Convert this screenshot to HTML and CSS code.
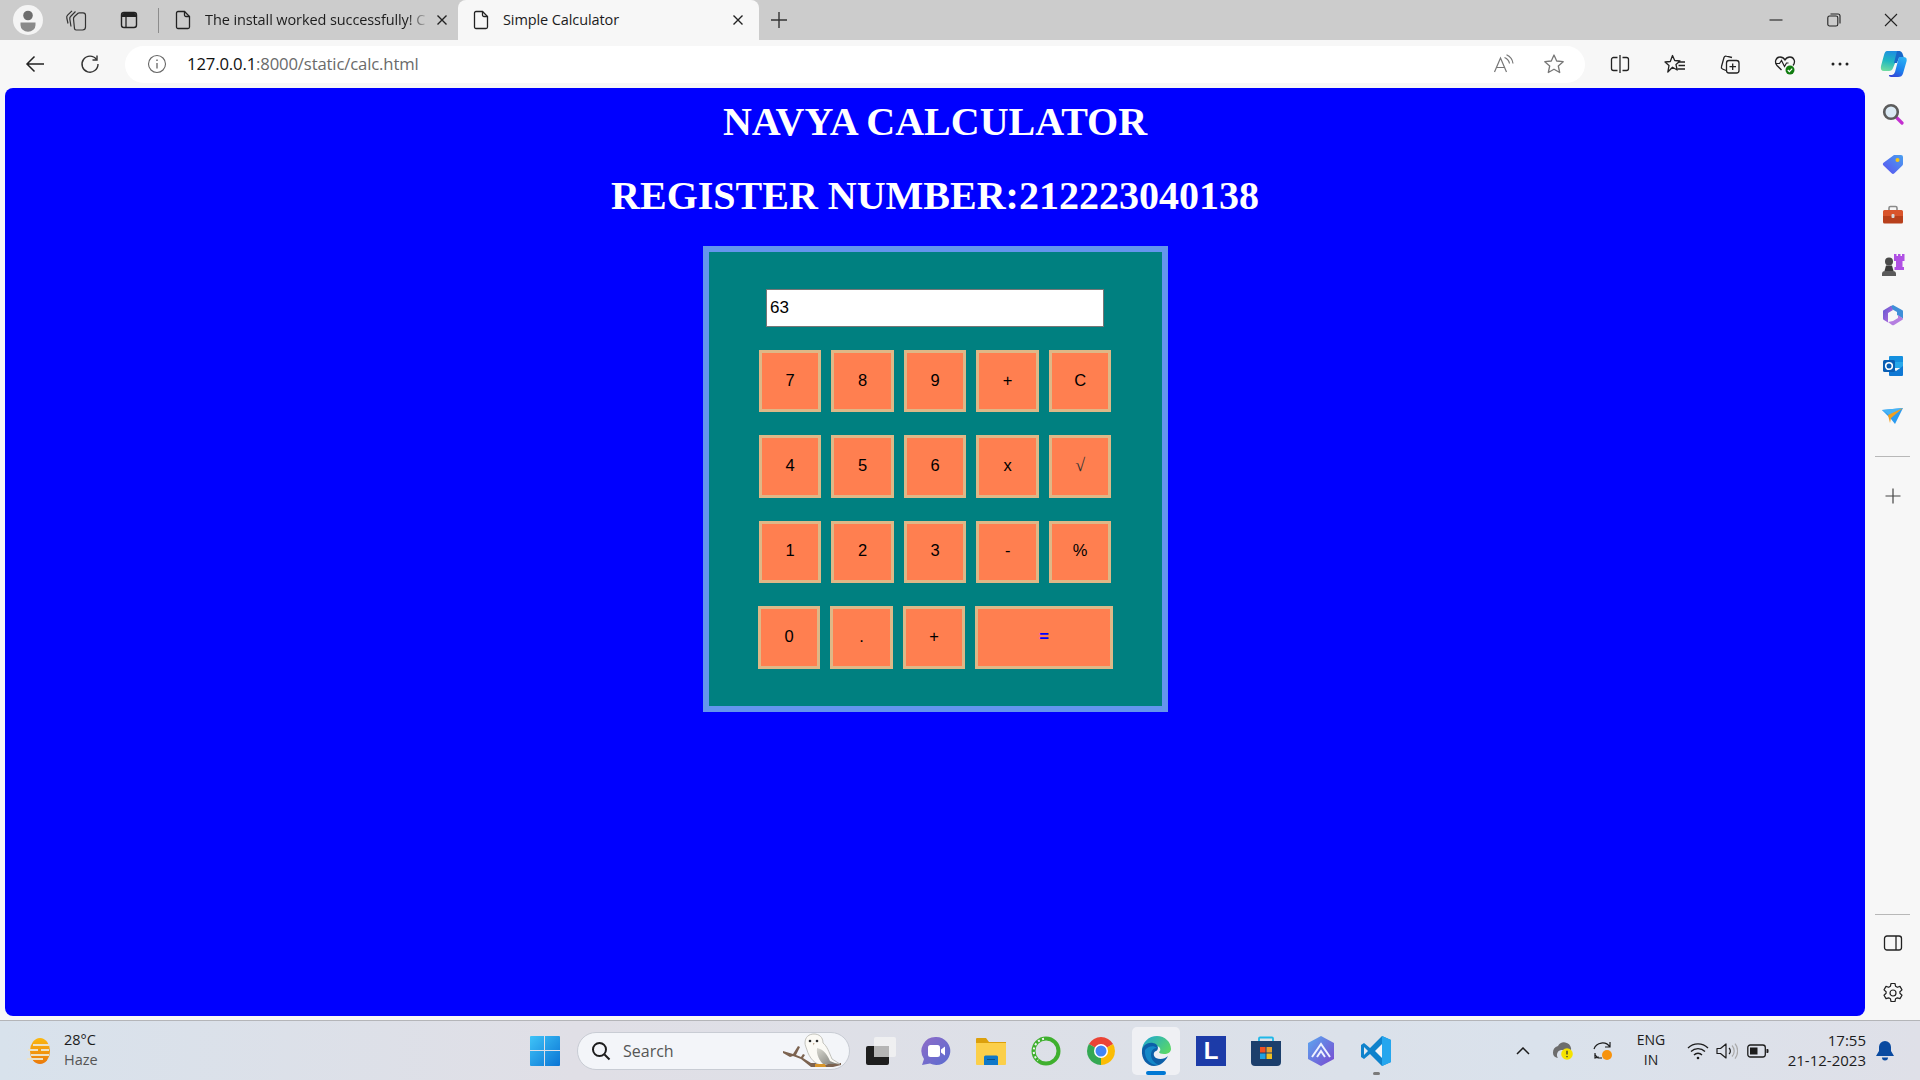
FILE: index.html
```html
<!DOCTYPE html>
<html lang="en">
    <head>
        <meta charset="UTF-8">
        <title>Simple Calculator</title>
        <link rel="stylesheet" href="styles.css">
    </head>
    <body>
        <!-- browser tab strip -->
        <div class="tabstrip">
            <div class="avatar">
                <svg width="30" height="30" viewBox="0 0 30 30"><circle cx="15" cy="15" r="15" fill="#f4f4f4"/><circle cx="15" cy="10.500" r="4.800" fill="#6e6e6e"/><path d="M7.500 17.500h15v2.500a6 5.500 0 0 1-15 0z" fill="#8a8a8a"/></svg>
            </div>
            <div class="strip-btn">
                <svg width="22" height="24" viewBox="0 0 22 24" fill="none" stroke="#333" stroke-width="1.200"><path d="M3 15.500L1.800 10a3 3 0 0 1 .8-2.800L7 2.800"/><path d="M6 18.500L4.800 11a3 3 0 0 1 1-2.800L10.500 3.500"/><path d="M11 22a1.500 1.500 0 0 1-1.500-1.300L8.500 11a3 3 0 0 1 1-2.500L13 5.300a2 2 0 0 1 1.500-.5H18a2.500 2.500 0 0 1 2.500 2.500V19a3 3 0 0 1-3 3z"/></svg>
            </div>
            <div class="strip-btn strip-gap">
                <svg width="20" height="20" viewBox="0 0 20 20"><rect x="2.500" y="2.500" width="15" height="15" rx="2.500" fill="none" stroke="#222" stroke-width="1.400"/><path d="M3 5a2 2 0 0 1 2-2h10a2 2 0 0 1 2 2v2H3z" fill="#222"/><path d="M7 7v10" stroke="#222" stroke-width="1.300"/></svg>
            </div>
            <div class="strip-sep"></div>
            <div class="tab">
                <svg class="doc" width="16" height="20" viewBox="0 0 16 20" fill="none" stroke="#222" stroke-width="1.300"><path d="M3 1.500h6.500l5 5V17a1.500 1.500 0 0 1-1.500 1.500H3A1.500 1.500 0 0 1 1.500 17V3A1.500 1.500 0 0 1 3 1.500z"/><path d="M9.500 1.500V5A1.500 1.500 0 0 0 11 6.500h3.500"/></svg>
                <span class="tab-title tab-fade">The install worked successfully! C</span>
                <svg class="tab-close" width="12" height="12" viewBox="0 0 12 12" stroke="#222" stroke-width="1.400"><path d="M1.500 1.500l9 9M10.500 1.500l-9 9"/></svg>
            </div>
            <div class="tab tab-active">
                <svg class="doc" width="16" height="20" viewBox="0 0 16 20" fill="none" stroke="#222" stroke-width="1.300"><path d="M3 1.500h6.500l5 5V17a1.500 1.500 0 0 1-1.500 1.500H3A1.500 1.500 0 0 1 1.500 17V3A1.500 1.500 0 0 1 3 1.500z"/><path d="M9.500 1.500V5A1.500 1.500 0 0 0 11 6.500h3.500"/></svg>
                <span class="tab-title">Simple Calculator</span>
                <svg class="tab-close" width="12" height="12" viewBox="0 0 12 12" stroke="#222" stroke-width="1.400"><path d="M1.500 1.500l9 9M10.500 1.500l-9 9"/></svg>
            </div>
            <div class="new-tab">
                <svg width="18" height="18" viewBox="0 0 18 18" stroke="#333" stroke-width="1.400"><path d="M9 1v16M1 9h16"/></svg>
            </div>
            <div class="win-btns">
                <div class="win-btn"><svg width="14" height="14" viewBox="0 0 14 14" stroke="#222" stroke-width="1.100"><path d="M0.500 7h13"/></svg></div>
                <div class="win-btn"><svg width="14" height="14" viewBox="0 0 14 14" fill="none" stroke="#222" stroke-width="1.100"><rect x="0.800" y="3" width="10" height="10" rx="1.800"/><path d="M3.500 1h7.500a2 2 0 0 1 2 2v7.500"/></svg></div>
                <div class="win-btn"><svg width="14" height="14" viewBox="0 0 14 14" stroke="#222" stroke-width="1.100"><path d="M1 1l12 12M13 1L1 13"/></svg></div>
            </div>
        </div>

        <!-- address bar row -->
        <div class="toolbar">
            <div class="tool tool-back">
                <svg width="20" height="18" viewBox="0 0 20 18" fill="none" stroke="#222" stroke-width="1.500"><path d="M19 9H2M9.500 1.500L2 9l7.500 7.500"/></svg>
            </div>
            <div class="tool tool-reload">
                <svg width="20" height="20" viewBox="0 0 20 20" fill="none" stroke="#333" stroke-width="1.400"><path d="M16.500 5.500A8 8 0 1 0 18 10"/><path d="M12.500 6h4.500V1.500"/></svg>
            </div>
            <div class="address">
                <svg class="info" width="20" height="20" viewBox="0 0 20 20" fill="none" stroke="#666" stroke-width="1.100"><circle cx="10" cy="10" r="8.500"/><path d="M10 9v5.500" stroke-width="1.300"/><path d="M10 5.500v1.500" stroke-width="1.400"/></svg>
                <span class="url"><b>127.0.0.1</b>:8000/static/calc.html</span>
                <svg class="read-aloud" width="22" height="20" viewBox="0 0 22 20" fill="none" stroke="#777" stroke-width="1.200"><path d="M1.500 18L7.500 4l6 14M3.500 13.500h8"/><path d="M11.500 3.500a8 8 0 0 1 5 6M13.500 0.800a11 11 0 0 1 6.500 8.700"/></svg>
                <svg class="star" width="22" height="22" viewBox="0 0 22 22" fill="none" stroke="#777" stroke-width="1.300"><path d="M11 2l2.700 6 6.500.7-4.900 4.300 1.400 6.500L11 16.200 5.300 19.500l1.400-6.500L1.800 8.700 8.300 8z" stroke-linejoin="round"/></svg>
            </div>
            <div class="tool tool-split">
                <svg width="20" height="20" viewBox="0 0 20 20" fill="none" stroke="#222" stroke-width="1.300"><path d="M7.500 3.500H3.500a2 2 0 0 0-2 2v9a2 2 0 0 0 2 2h4M12.500 3.500h4a2 2 0 0 1 2 2v9a2 2 0 0 1-2 2h-4"/><path d="M10 1v18"/></svg>
            </div>
            <div class="tool">
                <svg width="22" height="20" viewBox="0 0 22 20" fill="none" stroke="#222" stroke-width="1.300"><path d="M8.500 1.500l2.200 5 5.300.5-4 3.600 1.200 5.400-4.700-2.800L3.800 18l1.200-6.400-4-3.600 5.300-.5z" stroke-linejoin="round"/><path d="M14 8h7M14.500 11.500h6.500M13.500 15h7.500"/></svg>
            </div>
            <div class="tool">
                <svg width="22" height="22" viewBox="0 0 22 22" fill="none" stroke="#222" stroke-width="1.300"><path d="M7 17.500L3.500 16a2 2 0 0 1-1-2.500L5 4.500a2 2 0 0 1 2.400-1.300L13 4.500"/><rect x="7.500" y="7.500" width="12.500" height="12.500" rx="2.500"/><path d="M13.700 10.500v6.500M10.500 13.700H17"/></svg>
            </div>
            <div class="tool">
                <svg width="22" height="22" viewBox="0 0 22 22"><path d="M7.500 17L3 12.500C0 9 2 4 6 4c2.200 0 3.800 1 5 3 1.200-2 2.800-3 5-3 4 0 6 5 3 8.500" fill="none" stroke="#222" stroke-width="1.300"/><path d="M1.500 10.500h4l2-3 3 6 2-3.500h2" fill="none" stroke="#222" stroke-width="1.200"/><circle cx="16" cy="17" r="4.500" fill="#107c10"/><path d="M13.800 17l1.600 1.600 2.800-3" fill="none" stroke="#fff" stroke-width="1.200"/></svg>
            </div>
            <div class="tool">
                <svg width="18" height="4" viewBox="0 0 18 4" fill="#222"><circle cx="2" cy="2" r="1.500"/><circle cx="9" cy="2" r="1.500"/><circle cx="16" cy="2" r="1.500"/></svg>
            </div>
            <div class="tool tool-copilot">
                <svg width="27" height="28" viewBox="0 0 27 28"><defs><linearGradient id="cpa" x1="0.500" y1="0" x2="0.300" y2="1"><stop offset="0" stop-color="#1e8fe0"/><stop offset="0.500" stop-color="#20b8c0"/><stop offset="1" stop-color="#70dca0"/></linearGradient><linearGradient id="cpb" x1="0.700" y1="0" x2="0.300" y2="1"><stop offset="0" stop-color="#2ab0f4"/><stop offset="0.600" stop-color="#1c80ec"/><stop offset="1" stop-color="#3448d8"/></linearGradient></defs><path d="M7 1H20L13 18Q12 21 9 21H4Q0 21 1 16L4 5Q5 1 7 1z" fill="url(#cpa)"/><path d="M17 1h2q3 0 4 4l1 3h-5l-2 5h-3z" fill="#1868c8"/><path d="M19 7h4.500Q27.500 7 26.500 11.500L23 23.500Q22 27 18 27H11Q8.500 27 9 25H12Q14 25 15 22z" fill="url(#cpb)"/></svg>
            </div>
        </div>

        <div class="middle">
            <div class="page">
                <h1 class="title">NAVYA CALCULATOR</h1>
                <h1 class="regno">REGISTER NUMBER:212223040138</h1>
                <form class="calc" name="calc" onsubmit="return false">
                    <input class="display" type="text" value="63">
                    <div class="keys">
                        <div class="key-row">
                            <button class="key">7</button>
                            <button class="key">8</button>
                            <button class="key">9</button>
                            <button class="key">+</button>
                            <button class="key">C</button>
                        </div>
                        <div class="key-row">
                            <button class="key">4</button>
                            <button class="key">5</button>
                            <button class="key">6</button>
                            <button class="key">x</button>
                            <button class="key key-root">√</button>
                        </div>
                        <div class="key-row">
                            <button class="key">1</button>
                            <button class="key">2</button>
                            <button class="key">3</button>
                            <button class="key">-</button>
                            <button class="key">%</button>
                        </div>
                        <div class="key-row key-row-last">
                            <button class="key">0</button>
                            <button class="key">.</button>
                            <button class="key">+</button>
                            <button class="key key-equals">=</button>
                        </div>
                    </div>
                </form>
            </div>

            <!-- edge sidebar -->
            <div class="sidebar">
                <div class="side-item">
                    <svg width="22" height="22" viewBox="0 0 22 22"><path d="M13 13l7 7" stroke="#c32fd0" stroke-width="3.200" stroke-linecap="round"/><circle cx="9" cy="9" r="6.800" fill="#dbeaf4" stroke="#5c5c5c" stroke-width="2.600"/></svg>
                </div>
                <div class="side-item">
                    <svg width="22" height="20" viewBox="0 0 22 20"><defs><linearGradient id="tag" x1="0" y1="1" x2="1" y2="0"><stop offset="0" stop-color="#5a50f0"/><stop offset="1" stop-color="#4aa0f0"/></linearGradient></defs><path d="M12 1h7a2 2 0 0 1 2 2v7a2 2 0 0 1-.6 1.400l-8 7.800a2 2 0 0 1-2.800 0L1.500 11.500a2 2 0 0 1 0-2.800z" fill="url(#tag)"/><circle cx="15.500" cy="6" r="2" fill="#f5c518"/></svg>
                </div>
                <div class="side-item">
                    <svg width="22" height="20" viewBox="0 0 22 20"><path d="M7 5V3a1.500 1.500 0 0 1 1.500-1.500h5A1.500 1.500 0 0 1 15 3v2" fill="none" stroke="#8a8a8a" stroke-width="1.600"/><path d="M2.500 5h17A1.500 1.500 0 0 1 21 6.500V11H1V6.500A1.500 1.500 0 0 1 2.500 5z" fill="#d9542b"/><path d="M1 11h20v6a1.500 1.500 0 0 1-1.500 1.500h-17A1.500 1.500 0 0 1 1 17z" fill="#b8401c"/><rect x="9.500" y="9" width="3" height="4" rx="1" fill="#d8d8d8"/></svg>
                </div>
                <div class="side-item">
                    <svg width="24" height="24" viewBox="0 0 24 24"><path d="M13 1h2.500v2H17V1h2.500v2H21V1h2.500v7h-2v6h1.500v3H13.500v-3H15V8h-2z" fill="#b050e4"/><circle cx="8" cy="8.500" r="4" fill="#4a4a4a"/><path d="M5 12.500h6l1.500 5.500h-9z" fill="#3a3a3a"/><path d="M1 23v-2a3 3 0 0 1 3-3h8a3 3 0 0 1 3 3v2z" fill="#5a5a5a"/></svg>
                </div>
                <div class="side-item">
                    <svg width="22" height="22" viewBox="0 0 22 22"><defs><linearGradient id="m3a" x1="0" y1="0" x2="1" y2="1"><stop offset="0" stop-color="#5f56d0"/><stop offset="1" stop-color="#c070e0"/></linearGradient></defs><path d="M11 1l9 5a1.500 1.500 0 0 1 1 1.500v7L15 11V8L8 4 9 2z" fill="#3f8fd8"/><path d="M9 1.800L2 6A1.500 1.500 0 0 0 1 7.500v7A1.500 1.500 0 0 0 2 16l4 2.500V9l5-3z" fill="url(#m3a)"/><path d="M6 18l4 3a2 2 0 0 0 2 0l8-5a1.500 1.500 0 0 0 1-1.500l-5-3.500v3l-5 3z" fill="#b57ee0"/></svg>
                </div>
                <div class="side-item">
                    <svg width="22" height="22" viewBox="0 0 22 22"><path d="M8 1h12a1 1 0 0 1 1 1v5H7V2a1 1 0 0 1 1-1z" fill="#1490df"/><path d="M7 7h14v6H7z" fill="#28a8ea"/><path d="M7 11l7 5 7-5v9a1 1 0 0 1-1 1H8a1 1 0 0 1-1-1z" fill="#0f78d4"/><rect x="1" y="5" width="12" height="12" rx="1.500" fill="#0a5fb4"/><circle cx="7" cy="11" r="3.300" fill="none" stroke="#fff" stroke-width="1.600"/></svg>
                </div>
                <div class="side-item">
                    <svg width="22" height="18" viewBox="0 0 22 18"><path d="M0 3l21-2-8 16-4-5z" fill="#2b9bf0"/><path d="M0 3l21-2L7 8z" fill="#48b4f5"/><path d="M6 8l15-7L9 11l-1 5z" fill="#f0a020"/></svg>
                </div>
                <div class="side-rule"></div>
                <div class="side-item side-add">
                    <svg width="16" height="16" viewBox="0 0 16 16" stroke="#444" stroke-width="1.200"><path d="M8 0.500v15M0.500 8h15"/></svg>
                </div>
                <div class="side-bottom">
                    <div class="side-rule side-rule-low"></div>
                    <div class="side-item">
                        <svg width="20" height="18" viewBox="0 0 20 18" fill="none" stroke="#222" stroke-width="1.300"><rect x="1.500" y="2" width="17" height="14" rx="2.500"/><path d="M13 2v14"/></svg>
                    </div>
                    <div class="side-item">
                        <svg width="22" height="22" viewBox="0 0 22 22" fill="none" stroke="#222" stroke-width="1.200"><circle cx="11" cy="11" r="3"/><path d="M9 1.500h4l.6 2.800 1.700 1 2.700-.9 2 3.500-2.100 1.800v1.600l2.100 1.900-2 3.400-2.700-.8-1.700.9-.6 2.800H9l-.6-2.800-1.700-.9-2.700.8-2-3.400 2.100-1.900V9.700L2 7.900l2-3.500 2.700.9 1.700-1z" stroke-linejoin="round"/></svg>
                    </div>
                </div>
            </div>
        </div>

        <div class="taskbar">
            <div class="weather">
                <svg width="28" height="28" viewBox="0 0 28 28"><defs><linearGradient id="sun" x1="0" y1="0" x2="0" y2="1"><stop offset="0" stop-color="#fbb80f"/><stop offset="1" stop-color="#ea7a0c"/></linearGradient></defs><ellipse cx="15" cy="14" rx="10" ry="13" fill="url(#sun)"/><path d="M8 7h16v2H8zM3 12h10v2H3zM16 12h8v2h-8zM6 17h18v2H6zM2 21h16v2H2z" fill="#ece2c6"/></svg>
                <div class="weather-text">
                    <span>28°C</span>
                    <span class="weather-sub">Haze</span>
                </div>
            </div>
            <div class="start">
                <svg width="30" height="30" viewBox="0 0 30 30"><defs><linearGradient id="win" x1="0" y1="0" x2="1" y2="1"><stop offset="0" stop-color="#3fc4f8"/><stop offset="1" stop-color="#0a74d4"/></linearGradient></defs><path d="M1 0h13v14H0V1a1 1 0 0 1 1-1zM15 0h14a1 1 0 0 1 1 1v13H15zM0 15h14v15H1a1 1 0 0 1-1-1zM15 15h15v14a1 1 0 0 1-1 1H15z" fill="url(#win)"/></svg>
            </div>
            <div class="search">
                <svg class="search-glass" width="20" height="20" viewBox="0 0 20 20" fill="none" stroke="#1c1c1c" stroke-width="2"><circle cx="8.500" cy="8.500" r="6.500"/><path d="M13.500 13.500l5 5"/></svg>
                <span class="search-text">Search</span>
                <svg class="owl" width="70" height="36" viewBox="0 2 70 36"><defs><linearGradient id="wing" x1="0" y1="0" x2="1" y2="1"><stop offset="0" stop-color="#d8d8d0"/><stop offset="1" stop-color="#7e7e78"/></linearGradient></defs><path d="M4 20l10 3 5-8 2 1-4 8 5 2 2-3 2 1-2 3 8 5h30v2l-8 2H32l-10-8-8-3-3 1-7-4z" fill="#7c6350"/><path d="M26 12c0-6 4-9 9-9s9 3 9 9c4 3 6 9 9 16l8 5-10-1-6 2c-9 1-15-8-17-15-1-3-2-5-2-7z" fill="#fbfaf5" stroke="#b4b4ac" stroke-width="0.800"/><path d="M38 17c7 1 11 8 13 13l7 3-14 0c-3-3-7-9-6-16z" fill="url(#wing)"/><circle cx="31" cy="10" r="1.300" fill="#2c2c2c"/><circle cx="38" cy="10" r="1.300" fill="#2c2c2c"/><path d="M34 12l.7 2.500.8-2.500z" fill="#b8a088"/><path d="M36 33h10l1 3H36z" fill="#d8962c"/></svg>
            </div>
            <div class="pins">
                <div class="pin">
                    <svg width="30" height="30" viewBox="0 0 30 30"><rect x="0" y="10" width="23" height="19" rx="2" fill="#1e1e1e"/><rect x="8" y="1" width="22" height="20" rx="2" fill="#f2f2f2" fill-opacity="0.850"/><rect x="8" y="10" width="15" height="11" fill="#b5b5b5"/></svg>
                </div>
                <div class="pin">
                    <svg width="30" height="30" viewBox="0 0 30 30"><defs><linearGradient id="meet" x1="0" y1="0" x2="1" y2="1"><stop offset="0" stop-color="#8f6cc8"/><stop offset="1" stop-color="#5a6cd0"/></linearGradient></defs><path d="M15 1a14 14 0 1 1-6 26.500L1 29l2-6A14 14 0 0 1 15 1z" fill="url(#meet)"/><rect x="7" y="9" width="12" height="12" rx="2.500" fill="#fff"/><path d="M20 13.500l4-3v9l-4-3z" fill="#fff"/></svg>
                </div>
                <div class="pin">
                    <svg width="30" height="28" viewBox="0 0 30 28"><path d="M0 2a1 1 0 0 1 1-1h9l3 4h17v4H0z" fill="#dca00c"/><path d="M0 6h30v21a1 1 0 0 1-1 1H1a1 1 0 0 1-1-1z" fill="#fbcf4a"/><path d="M8 20a1.500 1.500 0 0 1 1.500-1.500h11A1.500 1.500 0 0 1 22 20v8H8z" fill="#0f78c8"/><path d="M11 22.500h8" stroke="#0a4f88" stroke-width="1"/></svg>
                </div>
                <div class="pin">
                    <svg width="30" height="30" viewBox="0 0 30 30"><circle cx="15" cy="15" r="12.500" fill="none" stroke="#3fb02e" stroke-width="4"/><path d="M13 2.800A12.500 12.500 0 0 0 7 24.500" fill="none" stroke="#f0f2f4" stroke-width="2" stroke-dasharray="2 2.500"/></svg>
                </div>
                <div class="pin">
                    <svg width="30" height="30" viewBox="0 0 30 30"><path d="M15 15L2.900 8A14 14 0 0 1 27.100 8z" fill="#ea4335"/><path d="M15 15L15 29A14 14 0 0 1 2.900 8z" fill="#34a853"/><path d="M15 15L27.100 8A14 14 0 0 1 15 29z" fill="#fbbc04"/><circle cx="15" cy="15" r="7" fill="#fff"/><circle cx="15" cy="15" r="5.500" fill="#4285f4"/></svg>
                </div>
                <div class="pin pin-active">
                    <svg width="30" height="30" viewBox="0 0 30 30"><defs><linearGradient id="edge" x1="0" y1="0" x2="1" y2="0.600"><stop offset="0" stop-color="#1aa4d8"/><stop offset="1" stop-color="#58d66a"/></linearGradient></defs><path d="M1 15C1 6 8 0 16 0c8 0 14 6 14 13 0 3-3 5-7 5-3 0-5-1-5-2 2-1 2-5-2-6-6-1-11 3-12 9-1 0-3-1-3-4z" fill="url(#edge)"/><path d="M1 14c1-5 6-8 11-7 6 1 6 7 3 8-3 1-3 5 0 7 4 2 9 1 12-2-3 6-8 10-14 10C6 30 0 23 1 14z" fill="#0c5fa8"/><path d="M4 14c3-4 9-5 12-2-4 0-6 3-6 7 0 4 3 8 8 10-8 1-15-6-14-15z" fill="#1488c8"/></svg>
                </div>
                <div class="pin">
                    <div class="pin-l">L</div>
                </div>
                <div class="pin">
                    <svg width="30" height="30" viewBox="0 0 30 30"><path d="M8 5V2.500A1 1 0 0 1 9 1.500h12a1 1 0 0 1 1 1V5" fill="none" stroke="#20b8e8" stroke-width="1.800"/><path d="M0 5h30v21a4 4 0 0 1-4 4H4a4 4 0 0 1-4-4z" fill="#1c3f6c"/><rect x="9" y="11" width="5.500" height="5.500" fill="#f25022"/><rect x="15.500" y="11" width="5.500" height="5.500" fill="#e8a02c"/><rect x="9" y="17.500" width="5.500" height="5.500" fill="#20a0e0"/><rect x="15.500" y="17.500" width="5.500" height="5.500" fill="#f0c020"/></svg>
                </div>
                <div class="pin">
                    <svg width="30" height="30" viewBox="0 0 30 30"><defs><linearGradient id="prism" x1="0" y1="0" x2="1" y2="1"><stop offset="0" stop-color="#5aa8f0"/><stop offset="1" stop-color="#7a48d0"/></linearGradient></defs><path d="M15 0l13 7v16l-13 7L2 23V7z" fill="url(#prism)"/><path d="M6 21L15 8l9 13M11 21l4-6 4 6" fill="none" stroke="#eef2ff" stroke-width="2"/></svg>
                </div>
                <div class="pin pin-running">
                    <svg width="30" height="30" viewBox="0 0 30 30"><path d="M21 0l9 4v22l-9 4L9 18l-6 5-3-2V9l3-2 6 5z" fill="#0f82cc"/><path d="M21 0l9 4v22l-9 4z" fill="#25a6ee"/><path d="M21 8l-7 7 7 7z" fill="#f2f4f8"/><path d="M3 11v8l4-4z" fill="#e4e8ee"/></svg>
                </div>
            </div>
            <div class="tray">
                <div class="tray-item">
                    <svg width="14" height="8" viewBox="0 0 14 8" fill="none" stroke="#1c1c1c" stroke-width="1.500"><path d="M1 7l6-6 6 6"/></svg>
                </div>
                <div class="tray-item">
                    <svg width="22" height="20" viewBox="0 0 22 20"><path d="M1 12a7 7 0 0 1 5-7 7 7 0 0 1 13 2 5 5 0 0 1 0 2H9a5 5 0 0 0-3 8 5 5 0 0 1-5-5z" fill="#6d6d6d"/><circle cx="15" cy="13" r="5.800" fill="#f5e300"/><path d="M15 9.800v3.700M15 15v1.200" stroke="#333" stroke-width="1.300"/></svg>
                </div>
                <div class="tray-item">
                    <svg width="22" height="22" viewBox="0 0 22 22"><path d="M2 9a9 9 0 0 1 16-2M18 2v5h-5M3 13v5l4-1" fill="none" stroke="#1c1c1c" stroke-width="1.200"/><path d="M3 15l3 3h4" fill="none" stroke="#1c1c1c" stroke-width="1.200"/><circle cx="15" cy="15" r="5" fill="#f7930e"/></svg>
                </div>
                <div class="tray-lang">
                    <span>ENG</span>
                    <span>IN</span>
                </div>
                <div class="tray-item tray-wifi">
                    <svg width="22" height="18" viewBox="0 0 22 18" fill="none" stroke="#1c1c1c" stroke-width="1.300"><path d="M1 6a14 14 0 0 1 20 0M4 9.500a10 10 0 0 1 14 0M7 13a5.500 5.500 0 0 1 8 0"/><circle cx="11" cy="16" r="1.300" fill="#1c1c1c" stroke="none"/></svg>
                </div>
                <div class="tray-item tray-sound">
                    <svg width="22" height="18" viewBox="0 0 22 18" fill="none" stroke="#1c1c1c" stroke-width="1.200"><path d="M1 6.500h3.500L10 2v14l-5.500-4.500H1z" stroke-linejoin="round"/><path d="M13 6a4 4 0 0 1 0 6"/><path d="M16 3.500a8 8 0 0 1 0 11M19 1.500a12 12 0 0 1 0 15" stroke="#aaa"/></svg>
                </div>
                <div class="tray-item tray-battery">
                    <svg width="22" height="14" viewBox="0 0 22 14"><rect x="0.800" y="1" width="17.500" height="12" rx="2.500" fill="none" stroke="#1c1c1c" stroke-width="1.300"/><rect x="3" y="3.500" width="7.500" height="7" fill="#1c1c1c"/><path d="M19.500 5h1a1 1 0 0 1 1 1v2a1 1 0 0 1-1 1h-1z" fill="#1c1c1c"/></svg>
                </div>
                <div class="clock">
                    <span>17:55</span>
                    <span>21-12-2023</span>
                </div>
                <div class="tray-item tray-bell">
                    <svg width="18" height="20" viewBox="0 0 18 20" fill="#0a4aa0"><path d="M9 0a6 6 0 0 1 6 6v4l3 5H0l3-5V6a6 6 0 0 1 6-6z"/><path d="M6 16.500h6a3 3 0 0 1-6 0z"/></svg>
                </div>
            </div>
        </div>
    </body>
</html>
```

FILE: styles.css
```css
html, body {
    margin: 0;
    padding: 0;
}
body {
    width: 1920px;
    height: 1080px;
    overflow: hidden;
    display: flex;
    flex-direction: column;
    background: #f7f7f7;
    font-family: "Open Sans", "Noto Sans", sans-serif;
    color: #1c1c1c;
}
svg {
    display: block;
}

/* tab strip */
.tabstrip {
    height: 40px;
    flex: none;
    display: flex;
    align-items: stretch;
    background: #cccccc;
}
.avatar {
    margin: 5px 13px 5px 13px;
}
.strip-btn {
    width: 40px;
    display: flex;
    align-items: center;
    justify-content: center;
}
.strip-gap {
    margin-left: 13px;
}
.strip-sep {
    width: 1px;
    margin: 8px 5px 0 9px;
    height: 25px;
    background: #8c8c8c;
}
.tab {
    width: 294px;
    box-sizing: border-box;
    padding: 0 13px 0 11px;
    display: flex;
    align-items: center;
    font-size: 14.500px;
}
.tab-active {
    width: 301px;
    padding: 0 15px;
    background: #f7f7f7;
    border-radius: 8px 8px 0 0;
}
.doc {
    flex: none;
    margin-right: 14px;
}
.tab-title {
    flex: 1;
    padding-bottom: 2px;
    white-space: nowrap;
    letter-spacing: -0.1px;
}
.tab-fade {
    -webkit-mask-image: linear-gradient(to right, #000 92%, rgba(0,0,0,0.2) 100%);
    mask-image: linear-gradient(to right, #000 92%, rgba(0,0,0,0.2) 100%);
    margin-right: 11px;
}
.tab-close {
    flex: none;
}
.new-tab {
    margin-left: 11px;
    width: 18px;
    display: flex;
    align-items: center;
}
.win-btns {
    margin-left: auto;
    display: flex;
}
.win-btn {
    width: 57.500px;
    display: flex;
    align-items: center;
    justify-content: center;
}

/* address bar */
.toolbar {
    height: 48px;
    flex: none;
    display: flex;
    align-items: center;
    background: #f7f7f7;
}
.tool {
    width: 55px;
    height: 36px;
    flex: none;
    display: flex;
    align-items: center;
    justify-content: center;
}
.tool-back {
    width: 36px;
    margin-left: 17px;
}
.tool-reload {
    width: 36px;
    margin-left: 19px;
}
.tool-split {
    margin-left: 7px;
}
.tool-copilot {
    width: 52px;
}
.address {
    width: 1460px;
    height: 37px;
    margin-left: 17px;
    flex: none;
    display: flex;
    align-items: center;
    background: #ffffff;
    border-radius: 19px;
}
.info {
    margin-left: 22px;
}
.url {
    margin-left: 20px;
    padding-bottom: 2px;
    font-size: 16.700px;
    letter-spacing: -0.15px;
    color: #6a6a6a;
}
.url b {
    font-weight: 400;
    color: #111111;
}
.read-aloud {
    margin-left: auto;
}
.star {
    margin-left: 28px;
    margin-right: 20px;
}

/* middle area */
.middle {
    flex: 1;
    display: flex;
    min-height: 0;
}
.page {
    width: 1860px;
    margin: 0 0 4px 5px;
    background: #0000ff;
    border-radius: 8px;
    overflow: hidden;
    color: #ffffff;
    font-family: "Liberation Serif", serif;
}
.page h1 {
    margin: 0;
    text-align: center;
    font-size: 40px;
    font-weight: bold;
}
.title {
    padding-top: 10px;
    line-height: 48px;
}
.regno {
    padding-top: 26px;
    line-height: 48px;
}
.calc {
    width: 465px;
    height: 466px;
    box-sizing: border-box;
    margin: 26px auto 0;
    padding-top: 37px;
    background: #008080;
    border: 6px solid #6495ed;
    font-family: "Liberation Sans", sans-serif;
}
.display {
    display: block;
    width: 338px;
    height: 38px;
    box-sizing: border-box;
    margin: 0 0 22.900px 57.500px;
    padding: 1px 3px;
    border: 1px solid #767676;
    background: #ffffff;
    color: #000000;
    font-family: "Liberation Sans", sans-serif;
    font-size: 17px;
}
.keys {
    padding-left: 50.400px;
    display: flex;
    flex-direction: column;
    gap: 22.900px;
}
.key-row {
    display: flex;
    gap: 10px;
}
.key-row-last {
    margin-left: -1px;
}
.key {
    width: 62.500px;
    height: 62.500px;
    flex: none;
    box-sizing: border-box;
    padding: 0 0 2px;
    background: #ff7f50;
    border: 3px solid #deb887;
    color: #000000;
    font-family: "Liberation Sans", sans-serif;
    font-size: 16.500px;
}
.key-equals {
    width: 137.600px;
    color: #0000ff;
    font-weight: bold;
}
.key-root {
    font-family: "Liberation Serif", serif;
    font-size: 18px;
    color: #333333;
}

/* edge sidebar */
.sidebar {
    width: 55px;
    flex: none;
    display: flex;
    flex-direction: column;
    padding-top: 1px;
    box-sizing: border-box;
}
.side-item {
    height: 50.300px;
    flex: none;
    display: flex;
    align-items: center;
    justify-content: center;
}
.side-rule {
    width: 35px;
    height: 1px;
    flex: none;
    margin: 15px 0 0 10px;
    background: #b8b8b8;
}
.side-add {
    margin-top: 14px;
}
.side-bottom {
    margin-top: auto;
    padding-bottom: 2px;
}
.side-rule-low {
    margin: 0 0 2px 10px;
}

/* windows taskbar */
.taskbar {
    height: 60px;
    flex: none;
    box-sizing: border-box;
    display: flex;
    align-items: center;
    border-top: 1px solid #b4b5b8;
    background: linear-gradient(to right, #d8e2ec, #e0dfe6 30%, #dce0e8 60%, #dae2ec 80%, #dfe0e8);
    font-size: 14px;
}
.weather {
    width: 530px;
    flex: none;
    box-sizing: border-box;
    padding-left: 25px;
    display: flex;
    align-items: center;
    gap: 11px;
}
.weather-text {
    display: flex;
    flex-direction: column;
    padding-bottom: 2px;
    line-height: 20px;
    font-size: 14.500px;
}
.weather-sub {
    color: #555555;
}
.start {
    flex: none;
}
.search {
    width: 273px;
    height: 38px;
    margin-left: 17px;
    flex: none;
    box-sizing: border-box;
    padding-left: 13px;
    display: flex;
    align-items: center;
    background: #f3f5f9;
    border: 1px solid #c8ccd4;
    border-radius: 19px;
    overflow: hidden;
}
.search-text {
    margin-left: 12px;
    font-size: 16px;
    color: #555555;
}
.owl {
    margin-left: auto;
}
.pins {
    margin-left: 3.500px;
    display: flex;
}
.pin {
    width: 55px;
    height: 48px;
    position: relative;
    display: flex;
    align-items: center;
    justify-content: center;
}
.pin-active {
    width: 48px;
    margin: 0 3.500px;
    background: #eff0f4;
    border-radius: 5px;
}
/* running app marks sit over the taskbar edge */
.pin-active::after {
    content: "";
    position: absolute;
    left: 14px;
    bottom: 0;
    width: 20px;
    height: 4px;
    border-radius: 2px;
    background: #0078d4;
}
.pin-running::after {
    content: "";
    position: absolute;
    left: 24px;
    bottom: 0;
    width: 7px;
    height: 3px;
    border-radius: 2px;
    background: #7a7a7a;
}
.pin-l {
    width: 30px;
    height: 30px;
    background: #1c3ba8;
    color: #ffffff;
    font-family: "Liberation Sans", sans-serif;
    font-size: 24px;
    font-weight: bold;
    line-height: 30px;
    text-align: center;
}
.tray {
    margin-left: auto;
    padding-right: 16px;
    display: flex;
    align-items: center;
}
.tray-item {
    width: 40px;
    height: 40px;
    display: flex;
    align-items: center;
    justify-content: center;
}
.tray-lang {
    width: 56px;
    display: flex;
    flex-direction: column;
    align-items: center;
    padding-bottom: 1px;
    line-height: 20px;
    font-size: 14px;
}
.tray-wifi {
    width: 30px;
    margin-left: 4px;
}
.tray-sound {
    width: 28px;
}
.tray-battery {
    width: 34px;
}
.clock {
    width: 91px;
    display: flex;
    flex-direction: column;
    align-items: flex-end;
    padding-bottom: 2px;
    line-height: 20px;
    font-size: 15px;
}
.tray-bell {
    width: 38px;
}
```
